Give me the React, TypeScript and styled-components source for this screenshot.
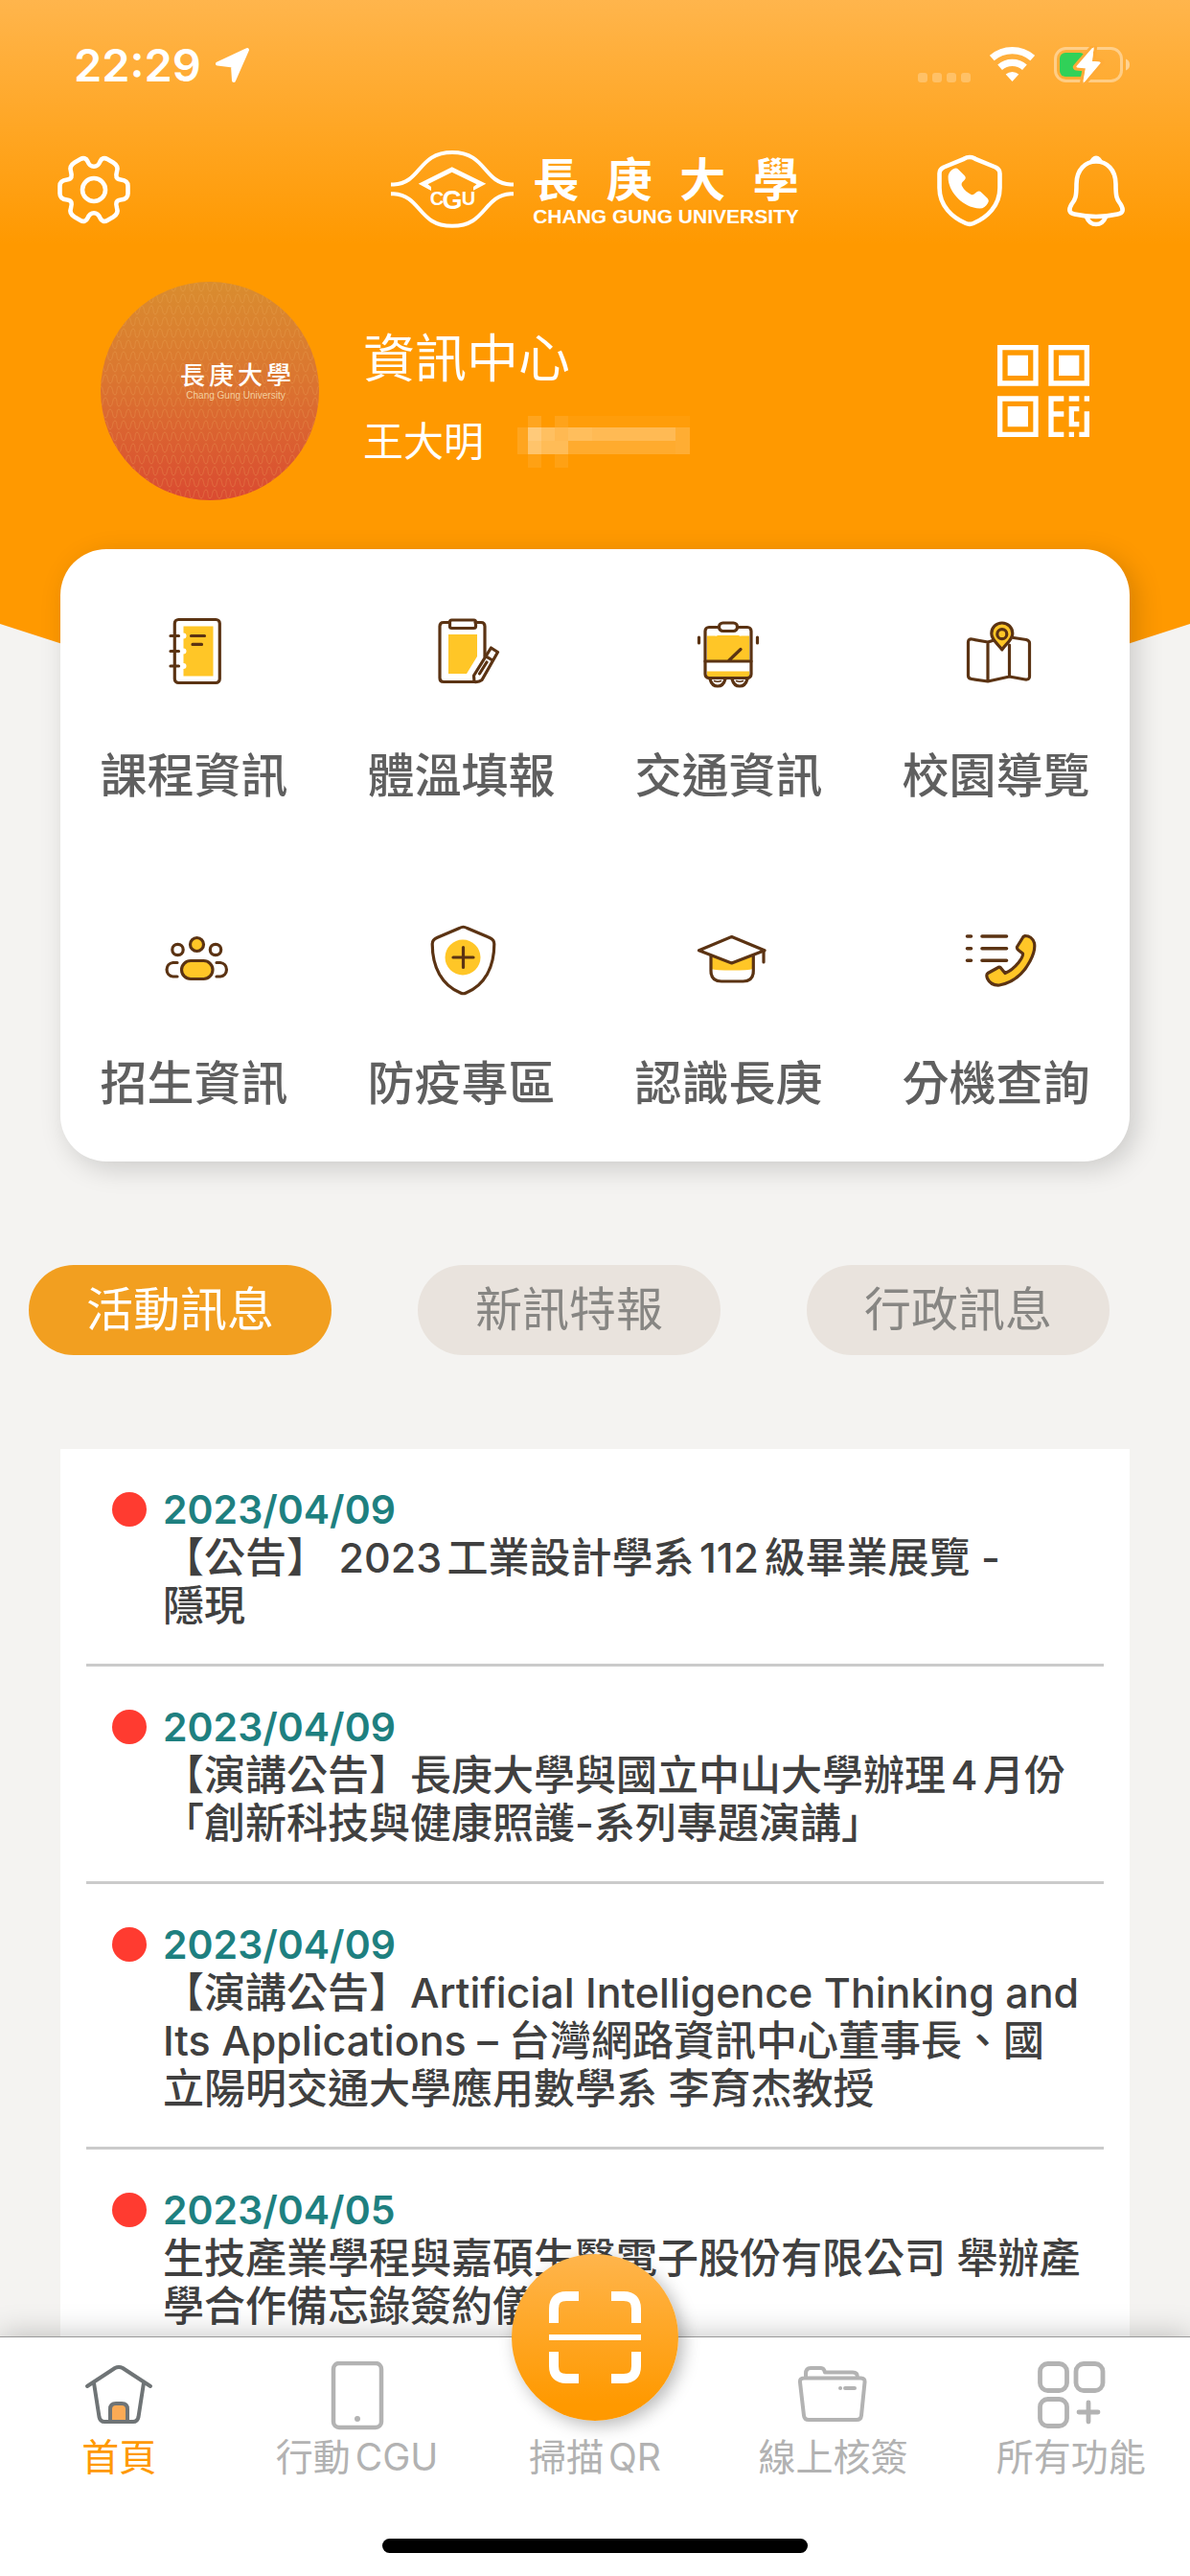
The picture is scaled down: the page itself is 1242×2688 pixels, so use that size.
import React, { useState } from 'react';
import styled, { createGlobalStyle } from 'styled-components';

const GlobalStyle = createGlobalStyle`
  * { box-sizing: border-box; }
  html, body { margin: 0; padding: 0; }
  body {
    font-family: Inter, "Noto Sans CJK TC", sans-serif;
    background: #f4f3f1;
    text-autospace: normal;
    text-spacing-trim: space-all;
  }
  button { font: inherit; color: inherit; border: 0; background: none; padding: 0; cursor: pointer; }
  a { color: inherit; text-decoration: none; }
  ul, h1, h2, p { margin: 0; padding: 0; list-style: none; font-weight: inherit; }
  svg { display: block; flex: none; }
`;

const Screen = styled.div`
  display: flex;
  flex-direction: column;
  height: 100vh;
`;

const Content = styled.main`
  flex: 1;
  min-height: 0;
  overflow-y: auto;
  scrollbar-width: none;
`;

/* ---------- hero ---------- */

const Hero = styled.header`
  padding-bottom: 329px;
  color: #fff;
  background: linear-gradient(#ffb54c 0, #ff9900 255px);
  clip-path: polygon(0 0, 100% 0, 100% calc(100% - 200px), 50% 100%, 0 calc(100% - 200px));
`;

const StatusBar = styled.div`
  display: flex;
  align-items: center;
  justify-content: space-between;
  height: 135px;
  padding: 0 63px 0 77px;
`;

const StatusGroup = styled.div<{ $gap: number }>`
  display: flex;
  align-items: center;
  gap: ${(p) => p.$gap}px;
`;

const Clock = styled.time`
  font-size: 47px;
  line-height: 60px;
  font-weight: 600;
`;

const CellDots = styled.span`
  display: flex;
  gap: 5px;
  align-self: flex-end;
  padding-bottom: 2px;

  i {
    width: 10px;
    height: 10px;
    border-radius: 3px;
    background: rgba(255, 255, 255, 0.25);
  }
`;

const AppBar = styled.div`
  display: grid;
  grid-template-columns: 1fr auto 1fr;
  align-items: center;
  height: 125px;
  padding: 0 56px;
`;

const BarActions = styled.div<{ $end?: boolean }>`
  display: flex;
  gap: 48px;
  justify-content: ${(p) => (p.$end ? 'flex-end' : 'flex-start')};
`;

const Logo = styled.div`
  display: flex;
  align-items: center;
  gap: 20px;
`;

const Wordmark = styled.h1`
  display: flex;
  flex-direction: column;
  font-family: "Liberation Sans", "Noto Sans CJK TC", sans-serif;
  font-weight: 700;
`;

const WordmarkChinese = styled.span`
  display: flex;
  justify-content: space-between;
  font-size: 48px;
  line-height: 56px;
`;

const WordmarkEnglish = styled.span`
  font-size: 21px;
  line-height: 18px;
`;

const Profile = styled.section`
  display: flex;
  align-items: center;
  gap: 46px;
  padding: 34px 105px 0;
`;

const Avatar = styled.div`
  display: grid;
  flex: none;
  width: 228px;
  height: 228px;
  border-radius: 50%;
  overflow: hidden;
  background: linear-gradient(#d98d2f, #db7530 45%, #da4a31);

  > * { grid-area: 1 / 1; }
`;

const AvatarName = styled.div`
  display: flex;
  flex-direction: column;
  align-items: center;
  width: 116px;
  margin: 82px 0 0 83px;
`;

const AvatarChinese = styled.span`
  display: flex;
  justify-content: space-between;
  width: 100%;
  font-size: 26px;
  line-height: 32px;
  font-weight: 500;
`;

const AvatarEnglish = styled.span`
  font-family: "Liberation Sans", sans-serif;
  font-size: 10px;
  line-height: 10px;
  color: #f3cf9f;
`;

const Identity = styled.div`
  flex: 1;
  display: flex;
  flex-direction: column;
  align-self: flex-start;
  gap: 18px;
  padding-top: 43px;
`;

const Department = styled.h2`
  font-size: 54px;
  line-height: 76px;
  font-weight: 400;
`;

const PersonRow = styled.p`
  display: flex;
  align-items: center;
  gap: 35px;
  font-size: 42px;
  line-height: 60px;
  font-weight: 400;
`;

/* ---------- shortcut card ---------- */

const ShortcutCard = styled.nav`
  position: relative;
  display: grid;
  grid-template-columns: repeat(4, 1fr);
  row-gap: 111px;
  margin: -278px 63px 0;
  padding: 57px 0 51px;
  border-radius: 48px;
  background: #fff;
  box-shadow: 7px 7px 28px rgba(0, 0, 0, 0.17);
`;

const Shortcut = styled.a`
  display: flex;
  flex-direction: column;
  align-items: center;
  gap: 50px;
  font-size: 49px;
  line-height: 60px;
  font-weight: 500;
  color: #5f5f5f;
`;

/* ---------- news ---------- */

const Tabs = styled.div`
  display: flex;
  gap: 90px;
  padding: 108px 30px 98px;
`;

const Tab = styled.button<{ $active: boolean }>`
  padding: 0 60px;
  border-radius: 47px;
  font-size: 49px;
  line-height: 94px;
  white-space: nowrap;
  color: ${(p) => (p.$active ? '#fff' : '#878683')};
  background: ${(p) => (p.$active ? '#f29f20' : '#e9e3dd')};
`;

const NewsList = styled.ul`
  margin: 0 63px;
  padding: 0 27px;
  background: #fff;
`;

const NewsItem = styled.li`
  border-bottom: 3px solid #cbcbcb;
`;

const NewsLink = styled.a`
  display: grid;
  grid-template-columns: 36px 1fr;
  column-gap: 17px;
  align-items: center;
  padding: 38px 0 36px 27px;
  line-height: 50px;
`;

const UnreadDot = styled.span`
  width: 36px;
  height: 36px;
  border-radius: 50%;
  background: #ff3b30;
`;

const NewsDate = styled.time`
  font-size: 41px;
  font-weight: 600;
  color: #1e8080;
`;

const NewsTitle = styled.p`
  grid-column: 2;
  font-size: 43px;
  font-weight: 500;
  white-space: pre-line;
  color: #404040;
`;

/* ---------- bottom bar ---------- */

const BottomBar = styled.nav`
  position: relative;
  border-top: 1px solid #999;
  background: #fff;
  box-shadow: 0 0 30px rgba(0, 0, 0, 0.25);
`;

const BottomItems = styled.div`
  display: grid;
  grid-template-columns: repeat(5, 1fr);
  padding-top: 25px;
`;

const BottomItem = styled.button<{ $active?: boolean }>`
  display: flex;
  flex-direction: column;
  align-items: center;
  justify-content: flex-end;
  gap: 3px;
  font-size: 39px;
  line-height: 50px;
  font-weight: 400;
  white-space: nowrap;
  color: ${(p) => (p.$active ? '#ff9900' : '#b2b2b2')};
`;

const ScanDisc = styled.span`
  position: absolute;
  top: -87px;
  left: 50%;
  display: flex;
  align-items: center;
  justify-content: center;
  width: 174px;
  height: 174px;
  margin-left: -87px;
  border-radius: 50%;
  background: linear-gradient(#ffb54c, #ff9900 90%);
  box-shadow: 5px 5px 18px rgba(0, 0, 0, 0.28);
`;

const HomeIndicator = styled.div`
  width: 444px;
  height: 15px;
  margin: 60px auto 24px;
  border-radius: 8px;
  background: #000;
`;

/* ---------- drawings ---------- */

const LocationArrow = () => (
  <svg width="37" height="38" viewBox="0 0 37 38" fill="#fff" stroke="#fff" strokeWidth="4" strokeLinejoin="round">
    <path d="M3 17.5 34 3 20 35 19 19.5Z" />
  </svg>
);

const WifiIcon = () => (
  <svg width="47" height="37" viewBox="0 0 47 37" fill="none" stroke="#fff" strokeWidth="7.2">
    <path d="M2.3 11.6A32.3 32.3 0 0 1 44.7 11.6M10.6 21.2A19.6 19.6 0 0 1 36.4 21.2" />
    <path d="M23.5 36 16.7 28.6A10 10 0 0 1 30.3 28.6Z" fill="#fff" stroke="none" />
  </svg>
);

const BatteryIcon = () => (
  <svg width="79" height="40" viewBox="0 0 79 40">
    <rect x="1.5" y="2.5" width="69" height="34" rx="11" fill="none" stroke="#fff" strokeOpacity=".4" strokeWidth="3" />
    <path d="M75 13.5Q79 15 79 19.5T75 25.5Z" fill="#fff" fillOpacity=".45" />
    <rect x="6" y="7" width="27" height="25" rx="6" fill="#30d158" />
    <path
      d="M41.6 1 23.4 22 33.3 23 30.5 38.7 48.7 17 40 16Z"
      fill="#fff"
      stroke="#ffab37"
      strokeWidth="7"
      strokeLinejoin="round"
      paintOrder="stroke"
    />
    <path d="M40.5 3 24.5 21.5 34 22.5 31.5 36.5 47.5 17.5 38.5 16.7Z" fill="#fff" stroke="#fff" strokeWidth="2" strokeLinejoin="round" />
  </svg>
);

const BarIcon = ({ children }: { children: React.ReactNode }) => (
  <svg width="84" height="84" viewBox="0 0 84 84" fill="none" stroke="#fff" strokeWidth="4.6" strokeLinejoin="round">
    {children}
  </svg>
);

const GearIcon = () => (
  <BarIcon>
    <path d="M42 17.8C46 17.8 47.5 15 48.5 12.5 50 9 53 8.3 56 10L62 13.5C66 16 67.5 19 66 23 64.5 28 65 31 70 31.5 75 32 77.5 34 77.5 38V46C77.5 50 75 52 70 52.5 65 53 64.5 56 66 61 67.5 65 66 68 62 70.5L56 74C53 75.7 50 75 48.5 71.5 47.5 69 46 66.2 42 66.2S36.5 69 35.5 71.5C34 75 31 75.7 28 74L22 70.5C18 68 16.5 65 18 61 19.5 56 19 53 14 52.5 9 52 6.5 50 6.5 46V38C6.5 34 9 32 14 31.5 19 31 19.5 28 18 23 16.5 19 18 16 22 13.5L28 10C31 8.3 34 9 35.5 12.5 36.5 15 38 17.8 42 17.8Z" />
    <circle cx="42" cy="42" r="12" />
  </BarIcon>
);

const HotlineIcon = () => (
  <BarIcon>
    <path d="M42 8C44 8 46 8.6 48 9.8L69 18.5C72 20 73.5 22 73.5 25V40C73.5 59 60 71 46 77Q42 78.8 38 77C24 71 10.5 59 10.5 40V25C10.5 22 12 20 15 18.5L36 9.8C38 8.6 40 8 42 8Z" />
    <path
      fill="#fff"
      stroke="none"
      d="M19.6 29C19.6 25 22 22 25 20.3Q28 18.6 30.5 21L36.5 27Q39 29.6 36.5 32L34.5 34Q33 35.5 34 38C36 42 40 45.5 44 47.2Q45.5 47.8 47 46.3L49.5 44.3Q52 42.5 54.5 45L60.5 50.8Q62.8 53.2 61 56C59 59.5 56 61.8 52.5 61.6 36 61 19.6 45 19.6 29Z"
    />
  </BarIcon>
);

const BellIcon = () => (
  <BarIcon>
    <path d="M42 12.5C53 12.5 62.5 21 62.5 36 62.5 51 64 52 67.5 57Q73 66 64.5 67.5 53 70 42 70 31 70 19.5 67.5 11 66 16.5 57C20 52 21.5 51 21.5 36 21.5 21 31 12.5 42 12.5Z" />
    <path d="M34.5 14Q37 6.5 42 6.5T49.5 14Z" fill="#fff" stroke="none" />
    <path d="M32 70.5Q35 78 42 78T52 70.5" />
  </BarIcon>
);

const Emblem = () => (
  <svg width="128" height="81" viewBox="0 0 128 81" fill="none" stroke="#fff" strokeWidth="4">
    <path d="M0 35.5H3C32 34 28 2 64 2S96 34 125 35.5H128M0 45.3H3C32 47 28 78.8 64 78.8S96 47 125 45.3H128" />
    <path
      fill="#fff"
      stroke="none"
      d="M28.7 34.7 63.7 17.3 99.3 34.7 86 41.7V38L89.5 35.3 63.7 22.7 38.5 35.3 42 38V42Z"
    />
    <g
      fill="#fff"
      stroke="none"
      fontFamily="'Liberation Sans', sans-serif"
      fontWeight="700"
      textAnchor="middle"
    >
      <text x="48" y="57" fontSize="20">C</text>
      <text x="64" y="61" fontSize="27">G</text>
      <text x="81" y="57" fontSize="20">U</text>
    </g>
  </svg>
);

const AvatarPattern = () => (
  <svg width="228" height="228" viewBox="0 0 228 228">
    <defs>
      <pattern id="waves" width="19" height="24" patternUnits="userSpaceOnUse">
        <g fill="none" stroke="#f0b060" strokeOpacity=".25">
          <path d="M0 10C3 10 2 1 5 1S7 10 10 10 12 1 15 1 16 10 19 10" />
          <path d="M0 13C3 13 2 22 5 22S7 13 10 13 12 22 15 22 16 13 19 13" />
        </g>
      </pattern>
    </defs>
    <rect width="228" height="228" fill="url(#waves)" />
  </svg>
);

/* Each row is [x, y, width, height, opacity] of one mosaic tile. */
const mosaic = [
  [0, 12, 11, 28, 0.12],
  [11, 0, 14, 12, 0.12],
  [39, 0, 14, 12, 0.1],
  [53, 0, 127, 12, 0.04],
  [11, 12, 14, 14, 0.48],
  [25, 12, 14, 14, 0.38],
  [39, 12, 14, 14, 0.32],
  [53, 12, 25, 14, 0.36],
  [78, 12, 87, 14, 0.33],
  [165, 12, 15, 28, 0.2],
  [11, 26, 14, 14, 0.42],
  [25, 26, 28, 14, 0.34],
  [53, 26, 112, 14, 0.18],
  [11, 40, 14, 14, 0.08],
  [39, 40, 14, 14, 0.08],
];

const HiddenNumber = () => (
  <svg width="180" height="54" viewBox="0 0 180 54" fill="#fff" shapeRendering="crispEdges">
    {mosaic.map(([x, y, w, h, o]) => (
      <rect key={`${x}-${y}`} x={x} y={y} width={w} height={h} fillOpacity={o} />
    ))}
  </svg>
);

const QrIcon = () => (
  <svg width="96" height="96" viewBox="0 0 18 18" fill="#fff">
    <path
      fillRule="evenodd"
      d="M0 0h8v8H0zM1 1v6h6V1zM10 0h8v8h-8zM11 1v6h6V1zM0 10h8v8H0zM1 11v6h6v-6zM2 2h4v4H2zM12 2h4v4h-4zM2 12h4v4H2z"
    />
    <path d="M10 10h3v1h-2v2h2v1h-2v3h2v1h-3zM14 10h2v1h-2zM17 10h1v1h-1zM14 12h2v1h-1v2h1v1h-2zM17 13h1v5h-2v-1h1zM14 17h1v1h-1z" />
  </svg>
);

const BROWN = '#5b3313';
const YELLOW = '#ffc627';

const ShortcutIcon = ({ children }: { children: React.ReactNode }) => (
  <svg
    width="100"
    height="100"
    viewBox="0 0 100 100"
    fill="none"
    stroke={BROWN}
    strokeWidth="3.2"
    strokeLinecap="round"
    strokeLinejoin="round"
  >
    {children}
  </svg>
);

const CourseIcon = () => (
  <ShortcutIcon>
    <path fill={YELLOW} stroke="none" d="M38.5 23.5H69.5V75.5H38.5V68A3 3 0 0 0 38.5 62V52.5A3 3 0 0 0 38.5 46.5V36.5A3 3 0 0 0 38.5 30.5Z" />
    <rect x="29.3" y="16.5" width="47" height="66" rx="4" />
    <path d="M25 33.5H33.5M25 49.5H33.5M25 65H33.5M46.5 33.5H60.5M48 42.4H57.5" />
  </ShortcutIcon>
);

const TemperatureIcon = () => (
  <ShortcutIcon>
    <path fill={YELLOW} stroke="none" d="M36 32H66V55L55 73H36Z" />
    <path d="M37 19.5H31Q27 19.5 27 23.5V77.5Q27 81.5 31 81.5H65M64 19.5H70Q74 19.5 74 23.5V55" />
    <rect x="37.5" y="17" width="27" height="8.5" rx="2" />
    <path d="M62.5 75 80.5 46 87.5 50.5 71 79.5Q68 82 63 81.5ZM74.5 54.5 82 59M76 61 68.5 73" />
  </ShortcutIcon>
);

const BusIcon = () => (
  <ShortcutIcon>
    <path fill={YELLOW} stroke="none" d="M27 33.5H35Q37 34 38 33H60Q61 34 63 33.5H71V59H27ZM27 70.5H71V76H27Z" />
    <rect x="25" y="24.5" width="48" height="53" rx="4" />
    <rect x="39.5" y="20" width="19" height="8.5" rx="4" fill="#fff" />
    <path d="M25 60H73M50 59 62 47.5M18.5 35V41M79.5 35V41" />
    <path d="M30 78.5Q32 86 38 86T46 78.5M53 78.5Q55 86 61 86T69 78.5" />
    <path strokeWidth="1.6" d="M34.5 80.5Q38 82 41.5 80.5M57.5 80.5Q61 82 64.5 80.5" />
  </ShortcutIcon>
);

const MapIcon = () => (
  <ShortcutIcon>
    <path d="M46 38.5 41 40 24.5 37Q20.5 36.5 20.5 40V75Q20.5 78 24 78.5L41 81 63.5 76 80 79Q84.5 79.5 84.5 76V41Q84.5 38.5 81 37.5L68 35.5M41 40V81M63.5 43V76" />
    <path fill={YELLOW} d="M55.8 48C52 42 44.8 38 44.8 31A11 11 0 0 1 66.8 31C66.8 38 59.5 42 55.8 48Z" />
    <circle cx="55.8" cy="31.7" r="5" />
  </ShortcutIcon>
);

const AdmissionsIcon = () => (
  <ShortcutIcon>
    <circle cx="52.5" cy="34.5" r="7" fill={YELLOW} />
    <circle cx="32.5" cy="40" r="5.7" />
    <circle cx="72" cy="40" r="5.7" />
    <rect x="36.5" y="51.5" width="32.5" height="19" rx="9.5" fill={YELLOW} />
    <path d="M32 53.5H27.5A7.3 7.3 0 0 0 27.5 68H32M73 53.5H77A7.3 7.3 0 0 1 77 68H73" />
  </ShortcutIcon>
);

const HealthIcon = () => (
  <ShortcutIcon>
    <circle cx="51" cy="48" r="18.5" fill={YELLOW} stroke="none" />
    <path d="M47.5 17.5Q51.5 15 55.5 17.5L79 27.5Q83.8 29.5 83.8 34C83.8 58 74 77 54.5 85Q51.5 86.5 48.5 85C29 77 19.2 58 19.2 34Q19.2 29.5 24 27.5ZM41 48H62M51.5 37.5V58.5" />
  </ShortcutIcon>
);

const CampusIcon = () => (
  <ShortcutIcon>
    <path fill={YELLOW} stroke="none" d="M31 46 52.7 55 75 46V60Q70 61.5 53 61.5T31 60Z" />
    <path d="M18.5 40.8 52.7 26.5 87 40.8 52.7 54Z" fill="#fff" />
    <path d="M31 46.5V62Q31 73 42 73H64.5Q75.3 73 75.3 62V46.5M86 41.5V53" />
  </ShortcutIcon>
);

const ExtensionIcon = () => (
  <ShortcutIcon>
    <path strokeWidth="3.6" d="M19.5 26H23.5M35 26H60.5M19.5 38.7H23.5M35 38.7H60.5M19.5 51.3H23.5M35 51.3H60.5" />
    <path
      fill={YELLOW}
      d="M78 26.5 71.5 37Q71 39 73 40.5L77.5 44Q78 47 73 53.5 66.5 61.5 59 64.5L54.5 59Q53 57.5 51 59L41 64.5Q39 66 40.5 70 44 77.5 53 77 74 73 85 52 91 41 89.5 33 87 25.5 80 25.5Z"
    />
  </ShortcutIcon>
);

const ScanIcon = () => (
  <svg width="96" height="96" viewBox="0 0 96 96" fill="none" stroke="#fff" strokeWidth="10">
    <path d="M31 5H18Q5 5 5 18V33M65 5H78Q91 5 91 18V33M31 91H18Q5 91 5 78V63M65 91H78Q91 91 91 78V63" />
    <path strokeWidth="6" d="M0 48H96" />
  </svg>
);

const NavIcon = ({ stroke = '#b3b3b3', children }: { stroke?: string; children: React.ReactNode }) => (
  <svg width="72" height="72" viewBox="0 0 72 72" fill="none" stroke={stroke} strokeWidth="4" strokeLinecap="round" strokeLinejoin="round">
    {children}
  </svg>
);

const HomeIcon = () => (
  <NavIcon stroke="#6f7476">
    <path d="M27 63V50Q27 44 33 44H39Q45 44 45 50V63Z" fill="#fbaa55" />
    <path d="M3 26 32 7Q36 4.8 40 7L69 26M10 22.5 15.5 58Q16.5 63 21 63H51Q55.5 63 56.5 58L62 22.5" />
  </NavIcon>
);

const TabletIcon = () => (
  <NavIcon>
    <rect x="11" y="2" width="50" height="67" rx="6" strokeWidth="4.5" />
    <circle cx="36" cy="60" r="3" fill="#b3b3b3" stroke="none" />
  </NavIcon>
);

const FolderIcon = () => (
  <NavIcon>
    <path d="M6 17.5H65.5Q70 17.5 69.5 22L66 56.5Q65.5 61 61 61H11Q6.5 61 6 56.5L2 22Q1.5 17.5 6 17.5ZM8 17V13Q8 7 13 7H24Q27 7 28 11.5H57Q62 11.5 62 16.5M44 28H44.1M49 28H59" />
  </NavIcon>
);

const AllIcon = () => (
  <NavIcon>
    <g strokeWidth="4.8">
      <rect x="3.5" y="2.5" width="28" height="28" rx="8" />
      <rect x="41" y="2.5" width="28" height="28" rx="8" />
      <rect x="3.5" y="39.5" width="28" height="28" rx="8" />
      <path d="M54 43V63M44 53H64" />
    </g>
  </NavIcon>
);

/* ---------- data ---------- */

const shortcuts = [
  { label: '課程資訊', Icon: CourseIcon },
  { label: '體溫填報', Icon: TemperatureIcon },
  { label: '交通資訊', Icon: BusIcon },
  { label: '校園導覽', Icon: MapIcon },
  { label: '招生資訊', Icon: AdmissionsIcon },
  { label: '防疫專區', Icon: HealthIcon },
  { label: '認識長庚', Icon: CampusIcon },
  { label: '分機查詢', Icon: ExtensionIcon },
];

const tabs = ['活動訊息', '新訊特報', '行政訊息'];

const news = [
  { date: '2023/04/09', title: '【公告】 2023工業設計學系112級畢業展覽 -\n隱現' },
  { date: '2023/04/09', title: '【演講公告】長庚大學與國立中山大學辦理4月份\n「創新科技與健康照護-系列專題演講」' },
  {
    date: '2023/04/09',
    title:
      '【演講公告】Artificial Intelligence Thinking and\nIts Applications – 台灣網路資訊中心董事長、國\n立陽明交通大學應用數學系 李育杰教授',
  },
  { date: '2023/04/05', title: '生技產業學程與嘉碩生醫電子股份有限公司 舉辦產\n學合作備忘錄簽約儀式' },
];

export default function App() {
  const [activeTab, setActiveTab] = useState(tabs[0]);

  return (
    <Screen>
      <GlobalStyle />
      <Content>
        <Hero>
          <StatusBar>
            <StatusGroup $gap={14}>
              <Clock>22:29</Clock>
              <LocationArrow />
            </StatusGroup>
            <StatusGroup $gap={20}>
              <CellDots><i /><i /><i /><i /></CellDots>
              <WifiIcon />
              <BatteryIcon />
            </StatusGroup>
          </StatusBar>
          <AppBar>
            <BarActions>
              <button type="button" aria-label="設定"><GearIcon /></button>
            </BarActions>
            <Logo>
              <Emblem />
              <Wordmark>
                <WordmarkChinese>
                  {[...'長庚大學'].map((c) => <span key={c}>{c}</span>)}
                </WordmarkChinese>
                <WordmarkEnglish>CHANG GUNG UNIVERSITY</WordmarkEnglish>
              </Wordmark>
            </Logo>
            <BarActions $end>
              <button type="button" aria-label="緊急電話"><HotlineIcon /></button>
              <button type="button" aria-label="通知"><BellIcon /></button>
            </BarActions>
          </AppBar>
          <Profile>
            <Avatar>
              <AvatarPattern />
              <AvatarName>
                <AvatarChinese>
                  {[...'長庚大學'].map((c) => <span key={c}>{c}</span>)}
                </AvatarChinese>
                <AvatarEnglish>Chang Gung University</AvatarEnglish>
              </AvatarName>
            </Avatar>
            <Identity>
              <Department>資訊中心</Department>
              <PersonRow>
                王大明
                <HiddenNumber />
              </PersonRow>
            </Identity>
            <button type="button" aria-label="QR"><QrIcon /></button>
          </Profile>
        </Hero>

        <ShortcutCard>
          {shortcuts.map(({ label, Icon }) => (
            <Shortcut key={label} href="#">
              <Icon />
              {label}
            </Shortcut>
          ))}
        </ShortcutCard>

        <Tabs role="tablist">
          {tabs.map((t) => (
            <Tab
              key={t}
              type="button"
              role="tab"
              aria-selected={t === activeTab}
              $active={t === activeTab}
              onClick={() => setActiveTab(t)}
            >
              {t}
            </Tab>
          ))}
        </Tabs>

        <NewsList>
          {news.map((n, i) => (
            <NewsItem key={i}>
              <NewsLink href="#">
                <UnreadDot />
                <NewsDate>{n.date}</NewsDate>
                <NewsTitle>{n.title}</NewsTitle>
              </NewsLink>
            </NewsItem>
          ))}
        </NewsList>
      </Content>

      <BottomBar>
        <BottomItems>
          <BottomItem type="button" $active><HomeIcon />首頁</BottomItem>
          <BottomItem type="button"><TabletIcon />行動CGU</BottomItem>
          <BottomItem type="button">
            <ScanDisc><ScanIcon /></ScanDisc>
            掃描QR
          </BottomItem>
          <BottomItem type="button"><FolderIcon />線上核簽</BottomItem>
          <BottomItem type="button"><AllIcon />所有功能</BottomItem>
        </BottomItems>
        <HomeIndicator />
      </BottomBar>
    </Screen>
  );
}
